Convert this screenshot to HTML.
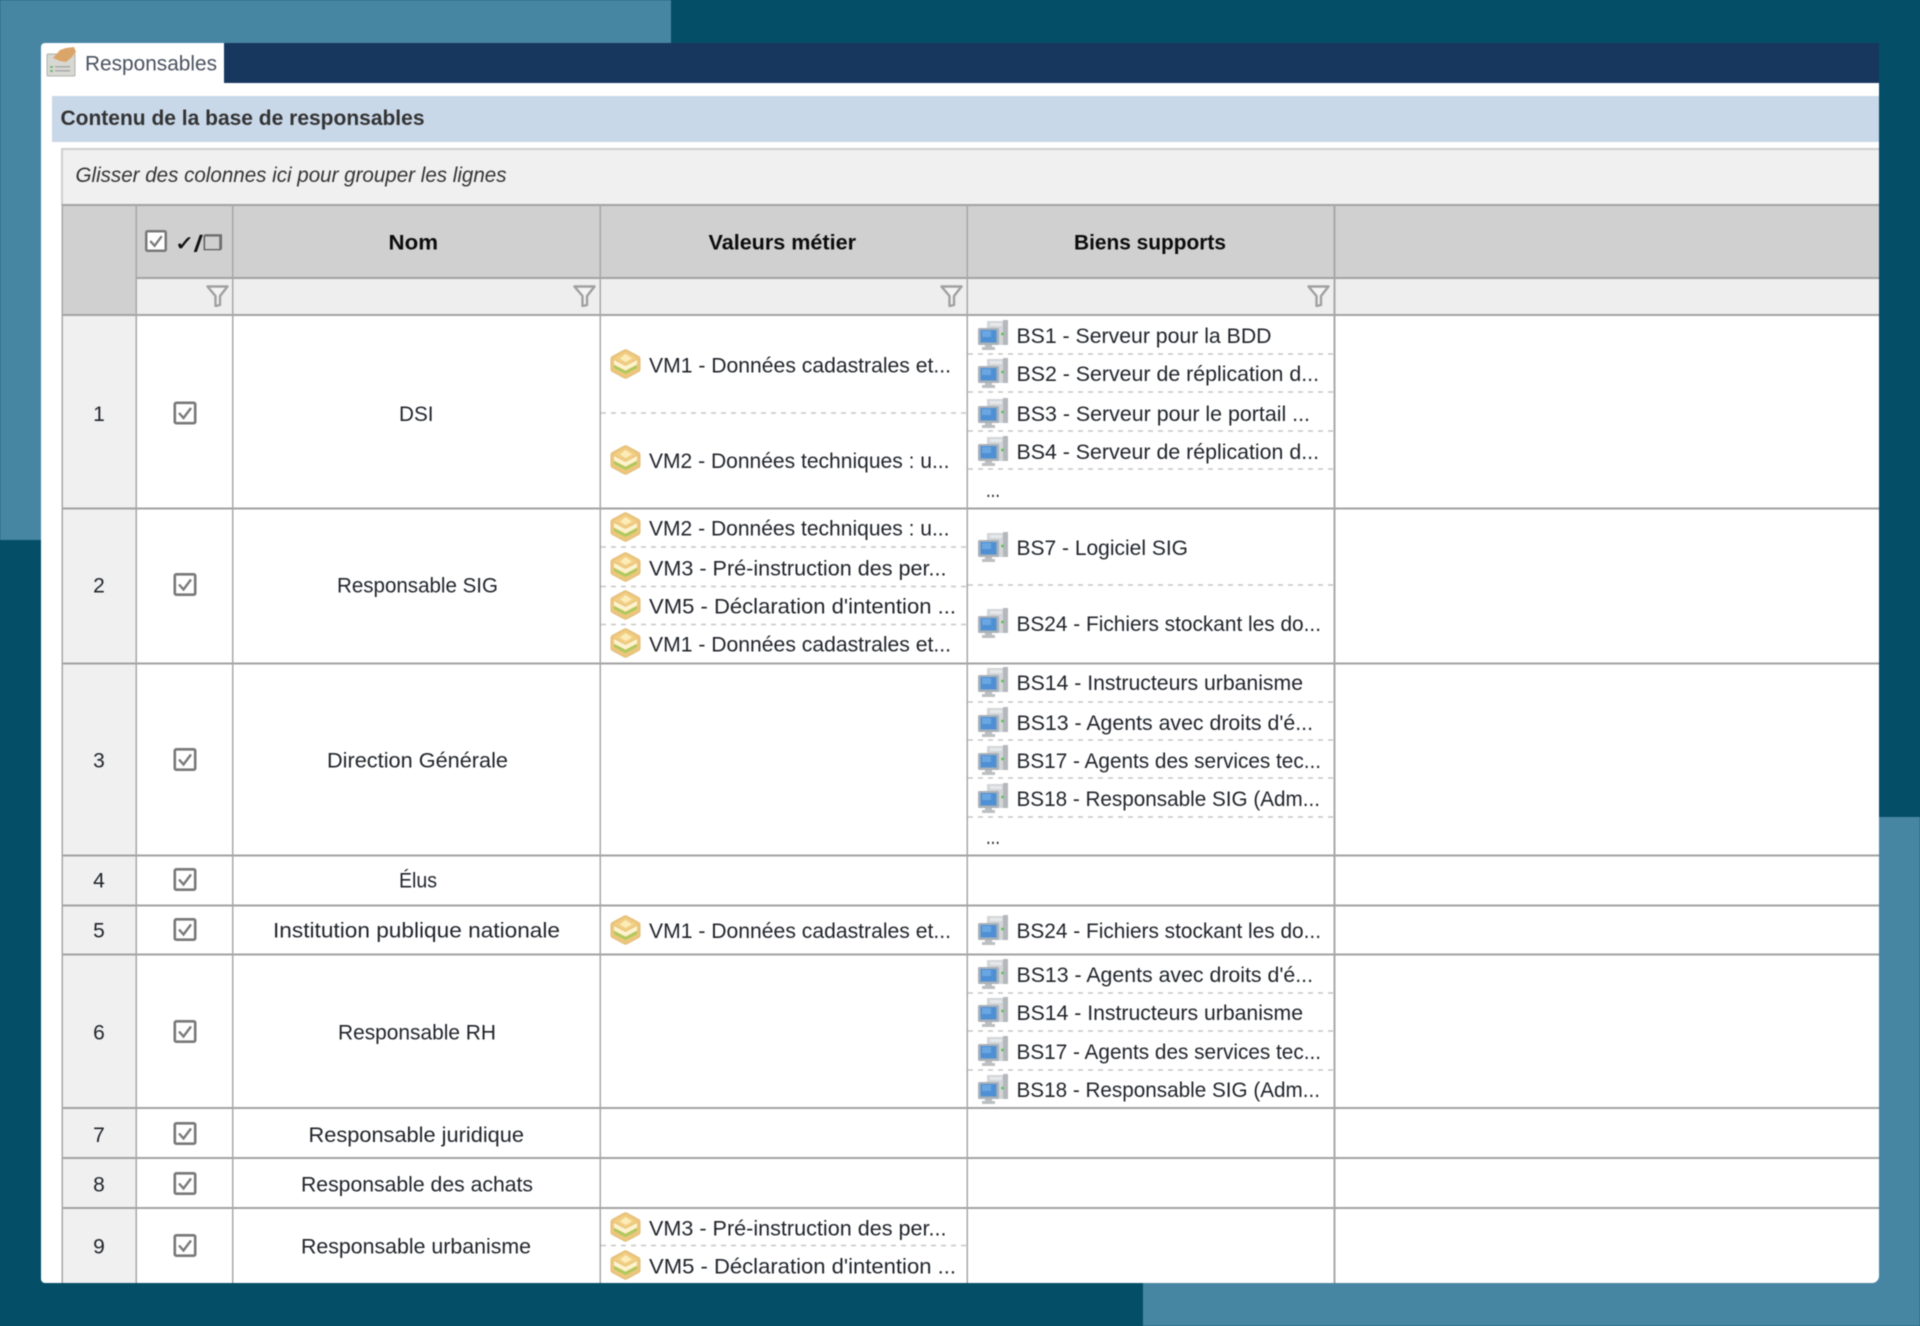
<!DOCTYPE html>
<html lang="fr">
<head>
<meta charset="utf-8">
<title>Responsables</title>
<style>
html,body{margin:0;padding:0;width:1920px;height:1326px;overflow:hidden;background:#044e68}
svg{display:block;filter:blur(.45px)}
text{font-family:"Liberation Sans",sans-serif;font-size:21px;fill:#1f2329}
.b{font-weight:bold;fill:#0c0c0c}
</style>
</head>
<body>
<svg xmlns="http://www.w3.org/2000/svg" width="1920" height="1326" viewBox="0 0 1920 1326">
<defs>
<symbol id="cube" viewBox="0 0 31 30">
<path d="M14 1.200Q15.500 .4 17 1.200L28.800 7.500Q30 8.200 30 9.500V20.500Q30 21.800 28.800 22.500L17 28.800Q15.500 29.600 14 28.800L2.200 22.500Q1 21.800 1 20.500V9.500Q1 8.200 2.200 7.500Z" fill="#ecc67c" stroke="#e2bd78" stroke-width="1"/>
<path d="M15.500 3 27 9.200 15.500 15.500 4 9.200Z" fill="#f2cf85"/>
<path d="M15.500 5 22 9.500 15.500 13 10 9.500Z" fill="#fbecb8"/>
<path d="M4 11 15.500 17 27 11V15.500L15.500 21.500 4 15.500Z" fill="#fcf3cf"/>
<path d="M4 16 15.500 22 27 16V19L15.500 25 4 19Z" fill="#acc95c"/>
</symbol>
<symbol id="srv" viewBox="0 0 30 30">
<rect x="9" y="1" width="21" height="24" fill="#d3d6d9"/>
<rect x="25" y="0" width="5" height="25" fill="#b4b8bc"/>
<rect x="12" y="3" width="12" height="3" fill="#e6e8ea"/>
<circle cx="24.500" cy="14" r="1.400" fill="#5cbf5c"/>
<rect x="0" y="8" width="21" height="17" rx="1.500" fill="#aab1b8"/>
<rect x="2.500" y="10" width="16" height="12.500" fill="#4f90d4"/>
<rect x="4" y="11" width="9" height="6" fill="#6aa6e2"/>
<path d="M7 25h7v2h3v3H4v-3h3z" fill="#bcbfc2"/>
</symbol>
<symbol id="chk" viewBox="0 0 23 23">
<rect x="1.300" y="1.300" width="20.400" height="20.400" rx="1.500" fill="#fff" stroke="#787878" stroke-width="2.600"/>
<path d="M5.500 11.500 10 16.500 17.500 6.500" fill="none" stroke="#7a7a7a" stroke-width="2.400"/>
</symbol>
<symbol id="flt" viewBox="0 0 23 22">
<path d="M1.500 1.500H21.500L14 11V20L9.500 21V11Z" fill="#f4f4f4" stroke="#a0a0a0" stroke-width="2.400" stroke-linejoin="round"/>
</symbol>
</defs>

<!-- background -->
<rect width="1920" height="1326" fill="#044e68"/>
<rect width="671" height="540" fill="#4786a3"/>
<rect x="1143" y="817" width="777" height="509" fill="#4786a3"/>

<!-- window -->
<path d="M45 43H1879V1283H45a4 4 0 0 1-4-4V47a4 4 0 0 1 4-4Z" fill="#fff"/>
<rect x="224" y="43" width="1655" height="40" fill="#17375e"/>

<!-- tab icon -->
<rect x="47" y="54" width="28" height="22" rx="1" fill="#d8d8d2" stroke="#b0b0aa"/>
<path d="M50 66h3v2h-3zM50 70h3v2h-3z" fill="#7db87d"/>
<path d="M55 66h15v1.500H55zM55 70h15v1.500H55z" fill="#a9a9a9"/>
<path d="M53 58 60 50 66 48 74 47 76 52 71 58 66 62 60 61Z" fill="#dba569"/>
<text x="85" y="70.500" textLength="132" lengthAdjust="spacingAndGlyphs" style="fill:#4a5260">Responsables</text>

<!-- section header -->
<rect x="52" y="96" width="1827" height="46" fill="#c9d8e9"/>
<text class="b" x="60.500" y="125" textLength="364" lengthAdjust="spacingAndGlyphs" style="fill:#333">Contenu de la base de responsables</text>

<!-- group panel -->
<rect x="61" y="148" width="1818" height="57" fill="#f0f0f0"/>
<rect x="61" y="148" width="1818" height="2" fill="#cfcfcf"/>
<rect x="61" y="148" width="2" height="57" fill="#cfcfcf"/>
<text x="75.500" y="182" textLength="431" lengthAdjust="spacingAndGlyphs" style="font-style:italic;fill:#333">Glisser des colonnes ici pour grouper les lignes</text>

<!-- header rows -->
<rect x="62" y="204" width="1817" height="74" fill="#d0d0d0"/>
<rect x="62" y="278" width="74" height="37" fill="#d0d0d0"/>
<rect x="136" y="278" width="1743" height="37" fill="#eeeeee"/>
<!-- row number column -->
<rect x="62" y="315" width="74" height="968" fill="#f0f0f0"/>

<!-- horizontal lines -->
<g fill="#a2a2a2">
<rect x="62" y="204" width="1817" height="2"/>
<rect x="136" y="277" width="1743" height="2"/>
<rect x="62" y="314" width="1817" height="2"/>
<rect x="62" y="507.500" width="1817" height="2"/>
<rect x="62" y="662.500" width="1817" height="2"/>
<rect x="62" y="854.500" width="1817" height="2"/>
<rect x="62" y="904.500" width="1817" height="2"/>
<rect x="62" y="953.500" width="1817" height="2"/>
<rect x="62" y="1107" width="1817" height="2"/>
<rect x="62" y="1157" width="1817" height="2"/>
<rect x="62" y="1207" width="1817" height="2"/>
</g>
<!-- vertical lines -->
<g fill="#a8a8a8">
<rect x="61.500" y="204" width="1.500" height="1079"/>
<rect x="135.500" y="204" width="1.500" height="1079"/>
<rect x="232" y="204" width="1.500" height="1079"/>
<rect x="599.500" y="204" width="1.500" height="1079"/>
<rect x="966.500" y="204" width="1.500" height="1079"/>
<rect x="1333.500" y="204" width="2" height="1079"/>
</g>
<!-- dashed dividers -->
<g stroke="#c6c6c6" stroke-width="1.500" stroke-dasharray="5 5" fill="none">
<path d="M601 413H966M601 547H966M601 586.500H966M601 624.500H966M601 1245.500H966"/>
<path d="M968 354H1333M968 392H1333M968 431H1333M968 469H1333"/>
<path d="M968 585H1333"/>
<path d="M968 702H1333M968 740H1333M968 778H1333M968 817H1333"/>
<path d="M968 993H1333M968 1031H1333M968 1070H1333"/>
</g>

<!-- header content -->
<use href="#chk" x="145" y="230" width="22" height="22"/>
<text x="175" y="250" textLength="48" lengthAdjust="spacingAndGlyphs" style="font-family:'DejaVu Sans',sans-serif;font-weight:bold;font-size:20px;fill:#111;stroke:#111;stroke-width:.5">✓/<tspan style="fill:#777;stroke:#555">❒</tspan></text>
<text class="b" x="388.500" y="249.500" textLength="49.500" lengthAdjust="spacingAndGlyphs">Nom</text>
<text class="b" x="708.500" y="249.500" textLength="147.500" lengthAdjust="spacingAndGlyphs">Valeurs métier</text>
<text class="b" x="1074" y="249.500" textLength="152" lengthAdjust="spacingAndGlyphs">Biens supports</text>
<use href="#flt" x="206" y="285" width="23" height="22"/>
<use href="#flt" x="573" y="285" width="23" height="22"/>
<use href="#flt" x="940" y="285" width="23" height="22"/>
<use href="#flt" x="1307" y="285" width="23" height="22"/>

<!-- row numbers -->
<g text-anchor="middle">
<text x="99" y="421">1</text>
<text x="99" y="592.500">2</text>
<text x="99" y="767.500">3</text>
<text x="99" y="887.500">4</text>
<text x="99" y="937.500">5</text>
<text x="99" y="1039.500">6</text>
<text x="99" y="1142">7</text>
<text x="99" y="1191.500">8</text>
<text x="99" y="1253.500">9</text>
</g>

<!-- checkboxes -->
<use href="#chk" x="173.500" y="401.500" width="23" height="23"/>
<use href="#chk" x="173.500" y="573" width="23" height="23"/>
<use href="#chk" x="173.500" y="748" width="23" height="23"/>
<use href="#chk" x="173.500" y="868" width="23" height="23"/>
<use href="#chk" x="173.500" y="918" width="23" height="23"/>
<use href="#chk" x="173.500" y="1020" width="23" height="23"/>
<use href="#chk" x="173.500" y="1122" width="23" height="23"/>
<use href="#chk" x="173.500" y="1172" width="23" height="23"/>
<use href="#chk" x="173.500" y="1234" width="23" height="23"/>

<!-- names -->
<text x="399" y="421" textLength="34.500" lengthAdjust="spacingAndGlyphs">DSI</text>
<text x="337" y="592.500" textLength="161" lengthAdjust="spacingAndGlyphs">Responsable SIG</text>
<text x="327" y="767.500" textLength="181" lengthAdjust="spacingAndGlyphs">Direction Générale</text>
<text x="399" y="887.500" textLength="38" lengthAdjust="spacingAndGlyphs">Élus</text>
<text x="273" y="937.500" textLength="287" lengthAdjust="spacingAndGlyphs">Institution publique nationale</text>
<text x="338" y="1039.500" textLength="158" lengthAdjust="spacingAndGlyphs">Responsable RH</text>
<text x="308.500" y="1142" textLength="215.500" lengthAdjust="spacingAndGlyphs">Responsable juridique</text>
<text x="301" y="1191.500" textLength="232" lengthAdjust="spacingAndGlyphs">Responsable des achats</text>
<text x="301" y="1253.500" textLength="230" lengthAdjust="spacingAndGlyphs">Responsable urbanisme</text>

<!-- VM -->
<use href="#cube" x="610" y="349" width="31" height="30"/>
<text x="649" y="372.500" textLength="302" lengthAdjust="spacingAndGlyphs">VM1 - Données cadastrales et...</text>
<use href="#cube" x="610" y="445" width="31" height="30"/>
<text x="649" y="468" textLength="300.500" lengthAdjust="spacingAndGlyphs">VM2 - Données techniques : u...</text>
<use href="#cube" x="610" y="512" width="31" height="30"/>
<text x="649" y="535.500" textLength="300.500" lengthAdjust="spacingAndGlyphs">VM2 - Données techniques : u...</text>
<use href="#cube" x="610" y="552" width="31" height="30"/>
<text x="649" y="575.500" textLength="297.500" lengthAdjust="spacingAndGlyphs">VM3 - Pré-instruction des per...</text>
<use href="#cube" x="610" y="590" width="31" height="30"/>
<text x="649" y="613.500" textLength="307" lengthAdjust="spacingAndGlyphs">VM5 - Déclaration d'intention ...</text>
<use href="#cube" x="610" y="628" width="31" height="30"/>
<text x="649" y="651.500" textLength="302" lengthAdjust="spacingAndGlyphs">VM1 - Données cadastrales et...</text>
<use href="#cube" x="610" y="915" width="31" height="30"/>
<text x="649" y="938" textLength="302" lengthAdjust="spacingAndGlyphs">VM1 - Données cadastrales et...</text>
<use href="#cube" x="610" y="1212" width="31" height="30"/>
<text x="649" y="1235.500" textLength="297.500" lengthAdjust="spacingAndGlyphs">VM3 - Pré-instruction des per...</text>
<use href="#cube" x="610" y="1250" width="31" height="30"/>
<text x="649" y="1273.500" textLength="307" lengthAdjust="spacingAndGlyphs">VM5 - Déclaration d'intention ...</text>

<!-- BS -->
<use href="#srv" x="978" y="320" width="30" height="30"/>
<text x="1016.500" y="343" textLength="255" lengthAdjust="spacingAndGlyphs">BS1 - Serveur pour la BDD</text>
<use href="#srv" x="978" y="358" width="30" height="30"/>
<text x="1016.500" y="381" textLength="302.500" lengthAdjust="spacingAndGlyphs">BS2 - Serveur de réplication d...</text>
<use href="#srv" x="978" y="398" width="30" height="30"/>
<text x="1016.500" y="421" textLength="293.500" lengthAdjust="spacingAndGlyphs">BS3 - Serveur pour le portail ...</text>
<use href="#srv" x="978" y="436" width="30" height="30"/>
<text x="1016.500" y="459" textLength="302.500" lengthAdjust="spacingAndGlyphs">BS4 - Serveur de réplication d...</text>
<text x="986" y="497" textLength="14" lengthAdjust="spacingAndGlyphs">...</text>

<use href="#srv" x="978" y="532" width="30" height="30"/>
<text x="1016.500" y="555" textLength="171.500" lengthAdjust="spacingAndGlyphs">BS7 - Logiciel SIG</text>
<use href="#srv" x="978" y="608" width="30" height="30"/>
<text x="1016.500" y="631" textLength="304.500" lengthAdjust="spacingAndGlyphs">BS24 - Fichiers stockant les do...</text>

<use href="#srv" x="978" y="667" width="30" height="30"/>
<text x="1016.500" y="690" textLength="286.500" lengthAdjust="spacingAndGlyphs">BS14 - Instructeurs urbanisme</text>
<use href="#srv" x="978" y="707" width="30" height="30"/>
<text x="1016.500" y="730" textLength="296.500" lengthAdjust="spacingAndGlyphs">BS13 - Agents avec droits d'é...</text>
<use href="#srv" x="978" y="745" width="30" height="30"/>
<text x="1016.500" y="768" textLength="304.500" lengthAdjust="spacingAndGlyphs">BS17 - Agents des services tec...</text>
<use href="#srv" x="978" y="783" width="30" height="30"/>
<text x="1016.500" y="806" textLength="303.500" lengthAdjust="spacingAndGlyphs">BS18 - Responsable SIG (Adm...</text>
<text x="986" y="844" textLength="14" lengthAdjust="spacingAndGlyphs">...</text>

<use href="#srv" x="978" y="915" width="30" height="30"/>
<text x="1016.500" y="938" textLength="304.500" lengthAdjust="spacingAndGlyphs">BS24 - Fichiers stockant les do...</text>

<use href="#srv" x="978" y="959" width="30" height="30"/>
<text x="1016.500" y="982" textLength="296.500" lengthAdjust="spacingAndGlyphs">BS13 - Agents avec droits d'é...</text>
<use href="#srv" x="978" y="997" width="30" height="30"/>
<text x="1016.500" y="1020" textLength="286.500" lengthAdjust="spacingAndGlyphs">BS14 - Instructeurs urbanisme</text>
<use href="#srv" x="978" y="1036" width="30" height="30"/>
<text x="1016.500" y="1059" textLength="304.500" lengthAdjust="spacingAndGlyphs">BS17 - Agents des services tec...</text>
<use href="#srv" x="978" y="1074" width="30" height="30"/>
<text x="1016.500" y="1097" textLength="303.500" lengthAdjust="spacingAndGlyphs">BS18 - Responsable SIG (Adm...</text>

<!-- bottom corner mask -->
<path d="M1872 1283h7v-7a7 7 0 0 1-7 7Z" fill="#4786a3"/>
</svg>
</body>
</html>
